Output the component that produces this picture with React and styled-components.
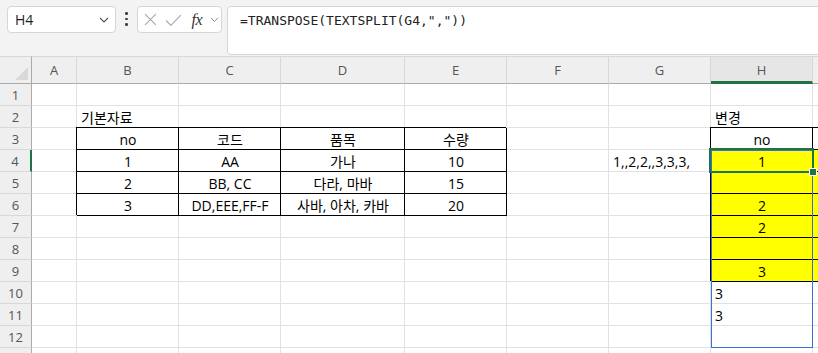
import React from "react";
import styled, { createGlobalStyle } from "styled-components";

const GlobalStyle = createGlobalStyle`
  html, body { margin: 0; padding: 0; background: #ffffff; }
  body {
    width: 818px;
    height: 353px;
    overflow: hidden;
    font-family: "Open Sans", "Noto Sans CJK KR", sans-serif;
  }
  * { box-sizing: border-box; }
`;

const Page = styled.div`
  display: flex;
  flex-direction: column;
  width: 818px;
  height: 353px;
  overflow: hidden;
`;

// formula bar
const FormulaBar = styled.div`
  display: flex;
  align-items: flex-start;
  height: 56px;
  flex: none;
  padding: 6px 0 0 7px;
  background: #f3f3f3;
`;

const NameBox = styled.div`
  display: flex;
  align-items: center;
  justify-content: space-between;
  width: 109px;
  height: 27px;
  padding: 0 6px 0 7px;
  background: #fff;
  border: 1px solid #d6d6d6;
  border-radius: 4px;
  font-size: 14px;
  color: #1f1f1f;
`;

const Dots = styled.div`
  display: flex;
  flex-direction: column;
  align-items: center;
  gap: 3px;
  width: 21px;
  padding-top: 6px;

  span {
    width: 2.5px;
    height: 2.5px;
    border-radius: 50%;
    background: #404040;
  }
`;

const FxBox = styled.div`
  display: flex;
  align-items: center;
  gap: 8px;
  width: 85px;
  height: 27px;
  padding: 0 2px 0 6px;
  background: #fff;
  border: 1px solid #d6d6d6;
  border-radius: 4px;
`;

const Fx = styled.span`
  font-family: "Liberation Serif", serif;
  font-style: italic;
  font-size: 16px;
  color: #333;
  margin-left: 2px;
  letter-spacing: -0.5px;
`;

const FormulaInput = styled.div`
  flex: 1;
  height: 49px;
  margin-left: 5px;
  margin-right: -12px;
  padding: 4px 0 0 12px;
  background: #fff;
  border: 1px solid #d6d6d6;
  border-radius: 4px;
  font-family: "DejaVu Sans Mono", "Liberation Mono", monospace;
  font-size: 13px;
  line-height: 20px;
  color: #222;
`;

// sheet grid: column 1 is the row header, row 1 the column header
const Sheet = styled.div`
  display: grid;
  grid-template-columns: 32px 45px 102px 102px 124px 102px 102px 102px 102px 102px;
  grid-template-rows: 28px repeat(13, 22px);
  flex: none;
`;

const Corner = styled.div`
  grid-row: 1;
  grid-column: 1;
  display: flex;
  align-items: flex-end;
  justify-content: flex-end;
  padding: 0 3px 3px 0;
  background: #efefef;
  border-top: 1px solid #d8d8d8;
  border-right: 1px solid #ababab;
  border-bottom: 1px solid #ababab;
`;

const ColHead = styled.div`
  grid-row: 1;
  grid-column: ${(p) => p.$c};
  display: flex;
  align-items: center;
  justify-content: center;
  background: ${(p) => (p.$sel ? "#e6e6e6" : "#efefef")};
  border-top: 1px solid #d8d8d8;
  border-right: 1px solid #d8d8d8;
  border-bottom: ${(p) => (p.$sel ? "3px solid #217346" : "1px solid #ababab")};
  padding-top: ${(p) => (p.$sel ? "2px" : "0")};
  font-size: 13px;
  color: #555;
`;

const RowHead = styled.div`
  grid-row: ${(p) => p.$r};
  grid-column: 1;
  display: flex;
  align-items: center;
  justify-content: center;
  background: #efefef;
  border-right: ${(p) => (p.$sel ? "2px solid #217346" : "1px solid #ababab")};
  border-bottom: 1px solid #d8d8d8;
  font-size: 13px;
  color: #555;
`;

const Cell = styled.div`
  grid-row: ${(p) => p.$r};
  grid-column: ${(p) => p.$c};
  display: flex;
  align-items: center;
  justify-content: ${(p) => (p.$center ? "center" : "flex-start")};
  padding: 1px 3px 0 4px;
  white-space: nowrap;
  background: ${(p) => (p.$fill ? "#ffff00" : "#ffffff")};
  border-right: 1px solid ${(p) => (p.$box ? "#000" : "#e1e1e1")};
  border-bottom: 1px solid ${(p) => (p.$box ? "#000" : "#e1e1e1")};
  box-shadow: ${(p) => (p.$box ? "-1px -1px 0 #000" : "none")};
  font-size: 14px;
  color: #000;
`;

const SpillRange = styled.div`
  grid-column: 9;
  grid-row: 5 / span 9;
  border: 1px solid #3a6fd8;
  pointer-events: none;
`;

const Selection = styled.div`
  position: relative;
  grid-column: 9;
  grid-row: 5;
  margin: -2px -1px -1px -2px;
  border: 2px solid #217346;
  pointer-events: none;
`;

const FillHandle = styled.span`
  position: absolute;
  right: -4px;
  bottom: -4px;
  width: 6px;
  height: 6px;
  background: #217346;
  outline: 1px solid #fff;
`;

const cols = ["A", "B", "C", "D", "E", "F", "G", "H", "I"];

// sheet content: [text, options]
const box = { box: true, center: true };
const yel = { box: true, center: true, fill: true };
const data = {
  2: { B: ["기본자료"], H: ["변경"] },
  3: { B: ["no", box], C: ["코드", box], D: ["품목", box], E: ["수량", box], H: ["no", box], I: ["", box] },
  4: { B: ["1", box], C: ["AA", box], D: ["가나", box], E: ["10", box], G: ["1,,2,2,,3,3,3,"], H: ["1", yel], I: ["", yel] },
  5: { B: ["2", box], C: ["BB, CC", box], D: ["다라, 마바", box], E: ["15", box], H: ["", yel], I: ["", yel] },
  6: { B: ["3", box], C: ["DD,EEE,FF-F", box], D: ["사바, 아차, 카바", box], E: ["20", box], H: ["2", yel], I: ["", yel] },
  7: { H: ["2", yel], I: ["", yel] },
  8: { H: ["", yel], I: ["", yel] },
  9: { H: ["3", yel], I: ["", yel] },
  10: { H: ["3"] },
  11: { H: ["3"] },
};

const Chevron = ({ size = 10, color = "#555" }) => (
  <svg width={size} height={size * 0.6} viewBox="0 0 10 6" fill="none">
    <path d="M1 1l4 4 4-4" stroke={color} strokeWidth="1.1" />
  </svg>
);

export default function App() {
  const rows = Array.from({ length: 13 }, (_, i) => i + 1);
  return (
    <Page>
      <GlobalStyle />
      <FormulaBar>
        <NameBox>
          <span>H4</span>
          <Chevron />
        </NameBox>
        <Dots>
          <span />
          <span />
          <span />
        </Dots>
        <FxBox>
          <svg width="13" height="13" viewBox="0 0 13 13" fill="none">
            <path d="M1 1l11 11M12 1L1 12" stroke="#a8a8a8" strokeWidth="1.1" />
          </svg>
          <svg width="17" height="12" viewBox="0 0 17 12" fill="none">
            <path d="M1 6.5l5 5L16 1" stroke="#a8a8a8" strokeWidth="1.1" />
          </svg>
          <Fx>fx</Fx>
          <Chevron size={9} color="#888" />
        </FxBox>
        <FormulaInput>=TRANSPOSE(TEXTSPLIT(G4,","))</FormulaInput>
      </FormulaBar>
      <Sheet>
        <Corner>
          <svg width="13" height="13" viewBox="0 0 13 13">
            <polygon points="13,0 13,13 0,13" fill="#d9d9d9" />
          </svg>
        </Corner>
        {cols.map((c, ci) => (
          <ColHead key={c} $c={ci + 2} $sel={c === "H"}>{c}</ColHead>
        ))}
        {rows.map((r) => (
          <React.Fragment key={r}>
            {/* row 13 only peeks in at the bottom edge, its number is out of view */}
            <RowHead $r={r + 1} $sel={r === 4}>{r < 13 ? r : ""}</RowHead>
            {cols.map((c, ci) => {
              const cell = data[r] && data[r][c];
              const opt = (cell && cell[1]) || {};
              return (
                <Cell
                  key={c}
                  $r={r + 1}
                  $c={ci + 2}
                  $box={opt.box}
                  $center={opt.center}
                  $fill={opt.fill}
                >
                  {cell ? cell[0] : ""}
                </Cell>
              );
            })}
          </React.Fragment>
        ))}
        <SpillRange />
        <Selection>
          <FillHandle />
        </Selection>
      </Sheet>
    </Page>
  );
}
